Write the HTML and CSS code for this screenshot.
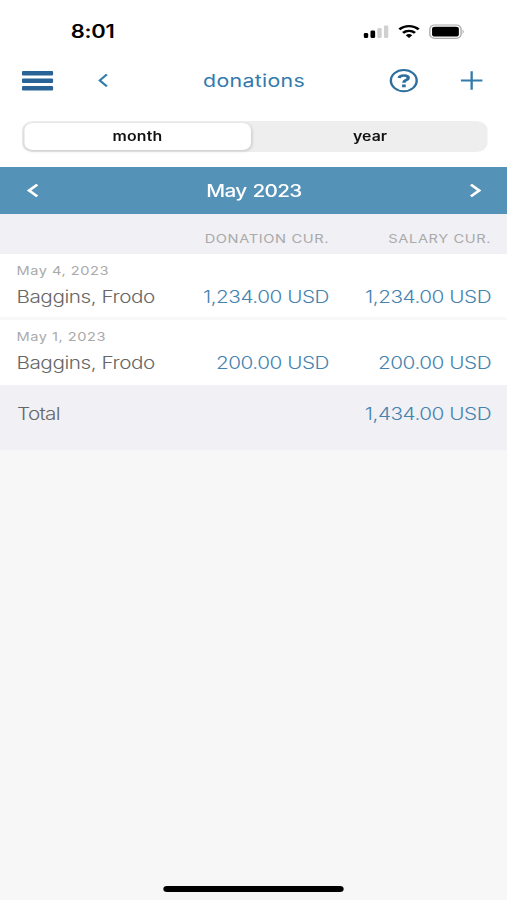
FILE: index.html
```html
<!DOCTYPE html>
<html lang="en">
<head>
<meta charset="utf-8">
<title>donations</title>
<link rel="stylesheet" href="styles.css">
</head>
<body>
<div class="screen">
  <header class="status">
    <span class="clock">8:01</span>
    <svg class="status-icons" width="84" height="16" viewBox="0 0 84 16">
      <rect x="0.5" y="9" width="3.6" height="5" rx="1.2"/>
      <rect x="6" y="6.6" width="3.8" height="7.4" rx="1.2"/>
      <rect x="11.6" y="4" width="3.6" height="10" rx="1.2" fill="#d0d0d0"/>
      <rect x="17" y="1.4" width="3.6" height="12.6" rx="1.2" fill="#d0d0d0"/>
      <g fill="none" stroke="#000" stroke-width="2.3">
        <path d="M29.7 5.4a11 11 0 0 1 15.8 0"/>
        <path d="M32.7 8.9a6.8 6.8 0 0 1 9.8 0"/>
      </g>
      <path d="M34.9 11.2a4 4 0 0 1 5.4 0L37.6 14z"/>
      <rect x="54.7" y="1" width="25.6" height="13.4" rx="4" fill="none" stroke="#aaa" stroke-width="1.1"/>
      <rect x="56.5" y="2.8" width="22" height="9.8" rx="2.4"/>
      <path d="M81.6 5.5q1.6 2.2 0 4.4z" fill="#999"/>
    </svg>
  </header>
  <nav class="toolbar">
    <svg class="menu" width="26" height="20" viewBox="0 0 26 20" fill="#2a6496">
      <rect y="0" width="25.6" height="4.6" rx="1"/>
      <rect y="7.5" width="25.6" height="4.6" rx="1"/>
      <rect y="15" width="25.6" height="4.6" rx="1"/>
    </svg>
    <svg class="back" width="9" height="14" viewBox="0 0 9 14"><path d="M7.7 0.4L1.9 6.4l5.8 6" fill="none" stroke="#337aad" stroke-width="2"/></svg>
    <h1>donations</h1>
    <svg class="help" width="24" height="24" viewBox="0 0 24 24" fill="none" stroke="#2e6f9f">
      <circle cx="12.3" cy="11.6" r="10.6" stroke-width="2"/>
      <path d="M8.5 9Q8.8 6.5 12.4 6.5q3.6 0 3.6 2.4 0 1.4-1.8 2.2Q12.4 12 12.4 13.8" stroke-width="2.7"/>
      <path d="M12.4 15.5v2.7" stroke-width="3"/>
    </svg>
    <svg class="add" width="18" height="19" viewBox="0 0 18 19"><path d="M9 0.3v18.4M0 9.5h18" stroke="#337aad" stroke-width="1.9"/></svg>
  </nav>
  <div class="segments">
    <div class="segment active">month</div>
    <div class="segment">year</div>
  </div>
  <div class="period">
    <svg width="10" height="14" viewBox="0 0 10 14"><path d="M8.6 0.6L1.8 6.5l6.8 5.9" fill="none" stroke="#fff" stroke-width="2.4"/></svg>
    <h2>May 2023</h2>
    <svg width="10" height="14" viewBox="0 0 10 14"><path d="M1.4 0.6L8.2 6.5l-6.8 5.9" fill="none" stroke="#fff" stroke-width="2.4"/></svg>
  </div>
  <main>
    <div class="columns"><span></span><span>DONATION CUR.</span><span>SALARY CUR.</span></div>
    <div class="entry">
      <p class="date">May 4, 2023</p>
      <div class="line"><span class="name">Baggins, Frodo</span><span class="amount">1,234.00 USD</span><span class="amount">1,234.00 USD</span></div>
    </div>
    <div class="entry">
      <p class="date">May 1, 2023</p>
      <div class="line"><span class="name">Baggins, Frodo</span><span class="amount">200.00 USD</span><span class="amount">200.00 USD</span></div>
    </div>
    <div class="total line"><span class="name">Total</span><span></span><span class="amount">1,434.00 USD</span></div>
  </main>
  <footer><div class="home"></div></footer>
</div>
</body>
</html>
```
FILE: styles.css
```css
* { box-sizing: border-box; margin: 0; padding: 0; }
body { background: #f7f7f7; overflow: hidden; }

/* The 416px layout is widened to fill the 507px window. */
.screen {
  width: 416px;
  height: 900px;
  display: flex;
  flex-direction: column;
  transform: scaleX(1.21875);
  transform-origin: 0 0;
  font-family: Inter, "Liberation Sans", sans-serif;
  color: #666;
}
svg { display: block; flex: none; }

.status {
  height: 54px;
  background: #fff;
  display: flex;
  justify-content: space-between;
  align-items: flex-start;
  padding: 20px 34px 0 58px;
}
.clock { font-size: 18px; line-height: 24px; font-weight: 600; letter-spacing: -.2px; color: #000; }
.status-icons { margin-top: 4px; }

.toolbar {
  height: 67px;
  background: #fff;
  display: grid;
  grid-template-columns: 62.9px 64.5px 127px 71.5px 52.2px;
  align-items: center;
  padding: 0 0 14px 17.6px;
}
h1 { font-size: 17.5px; font-weight: 400; line-height: 24px; letter-spacing: .25px; color: #337aad; text-align: center; }
.help { justify-self: end; }
.add { justify-self: end; }

.segments {
  height: 31px;
  margin: 0 16.5px 0 17.8px;
  padding: 2px;
  border-radius: 9px;
  background: #eee;
  display: grid;
  grid-template-columns: 186px 1fr;
  box-shadow: 0 0 0 46px #fff;
  clip-path: inset(0 -20px -15px -20px);
}
.segment { font-size: 13px; line-height: 27px; font-weight: 600; letter-spacing: .2px; text-align: center; color: #111; }
.segment:last-child { padding-left: 4px; letter-spacing: 0; }
.active { background: #fff; border-radius: 7px; box-shadow: 0 1px 3px rgba(0, 0, 0, .18); }

.period {
  height: 47px;
  margin-top: 15px;
  padding: 0 21.5px 0 22.2px;
  background: #5592b8;
  display: flex;
  justify-content: space-between;
  align-items: center;
  color: #fff;
}
h2 { font-size: 17px; font-weight: 500; line-height: 24px; letter-spacing: -.55px; word-spacing: 1px; }

.columns, .line { display: grid; grid-template-columns: 123px 133px 133px; }
.columns {
  height: 40px;
  padding: 16px 13px 0 14px;
  background: #f0f0f5;
  font-size: 12px;
  line-height: 18px;
  letter-spacing: .5px;
  color: #aaa;
  text-align: right;
}
.entry {
  height: 66px;
  padding: 8px 13px 0 13.5px;
  background: #fff;
  border-bottom: 3px solid #f8f8f8;
}
.entry:nth-child(3) { border-bottom: 0; height: 65px; }
.date { font-size: 12px; line-height: 17px; letter-spacing: .42px; color: #aaa; }
.line { font-size: 17px; font-weight: 350; line-height: 24px; letter-spacing: -.38px; }
.entry .line { padding-top: 6px; grid-template-columns: 123.5px 133px 133px; }
.amount { text-align: right; color: #4583af; }
.total { height: 65px; padding: 17px 13px 0 14px; background: #f0f0f5; }
.total .name { letter-spacing: -.6px; }

footer { margin-top: auto; height: 14px; display: flex; justify-content: center; }
.home { width: 148px; height: 5.5px; border-radius: 3px; background: #000; }
```
